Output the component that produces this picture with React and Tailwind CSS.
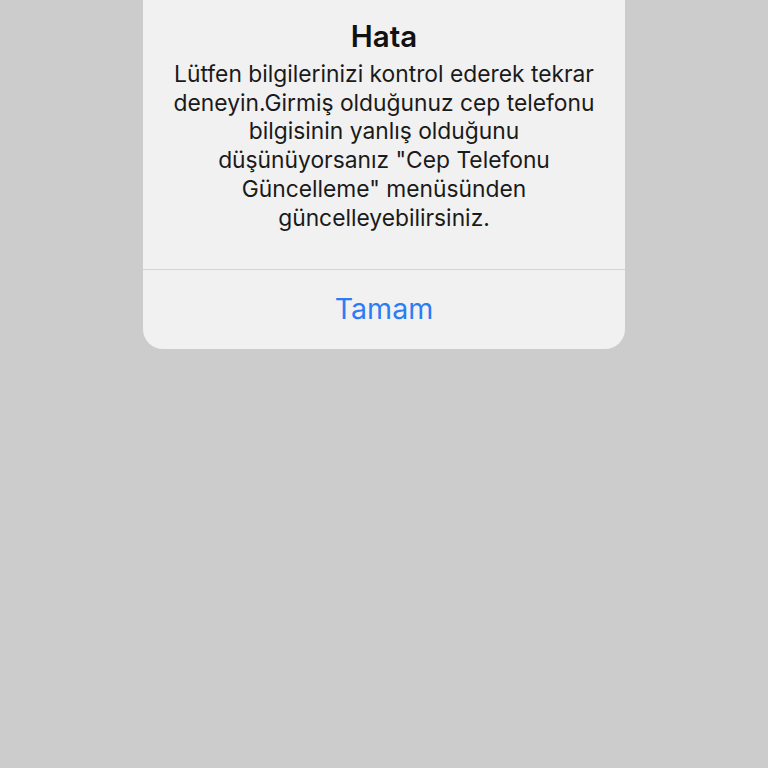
export default function App() {
  return (
    <div className="min-h-[768px] w-full bg-[#cccccc] font-['Inter','Roboto',sans-serif]">
      <div className="mx-auto w-[482px] rounded-b-[20px] bg-[#f1f1f1]">
        <div className="px-4 pt-[18px] pb-[37px] text-center">
          <h1 className="text-[29.5px] leading-[36px] font-semibold text-[#111]">Hata</h1>
          <p className="mt-[6px] text-[22.8px] leading-[28.7px] text-[#1a1a1a]">
            Lütfen bilgilerinizi kontrol ederek tekrar
            <br />
            deneyin.Girmiş olduğunuz cep telefonu
            <br />
            bilgisinin yanlış olduğunu
            <br />
            düşünüyorsanız "Cep Telefonu
            <br />
            Güncelleme" menüsünden
            <br />
            güncelleyebilirsiniz.
          </p>
        </div>
        <div className="h-px bg-[#d4d4d4]" />
        <button className="flex h-[79px] w-full items-center justify-center text-[28.6px] text-[#2c7cf3]">
          Tamam
        </button>
      </div>
    </div>
  )
}
